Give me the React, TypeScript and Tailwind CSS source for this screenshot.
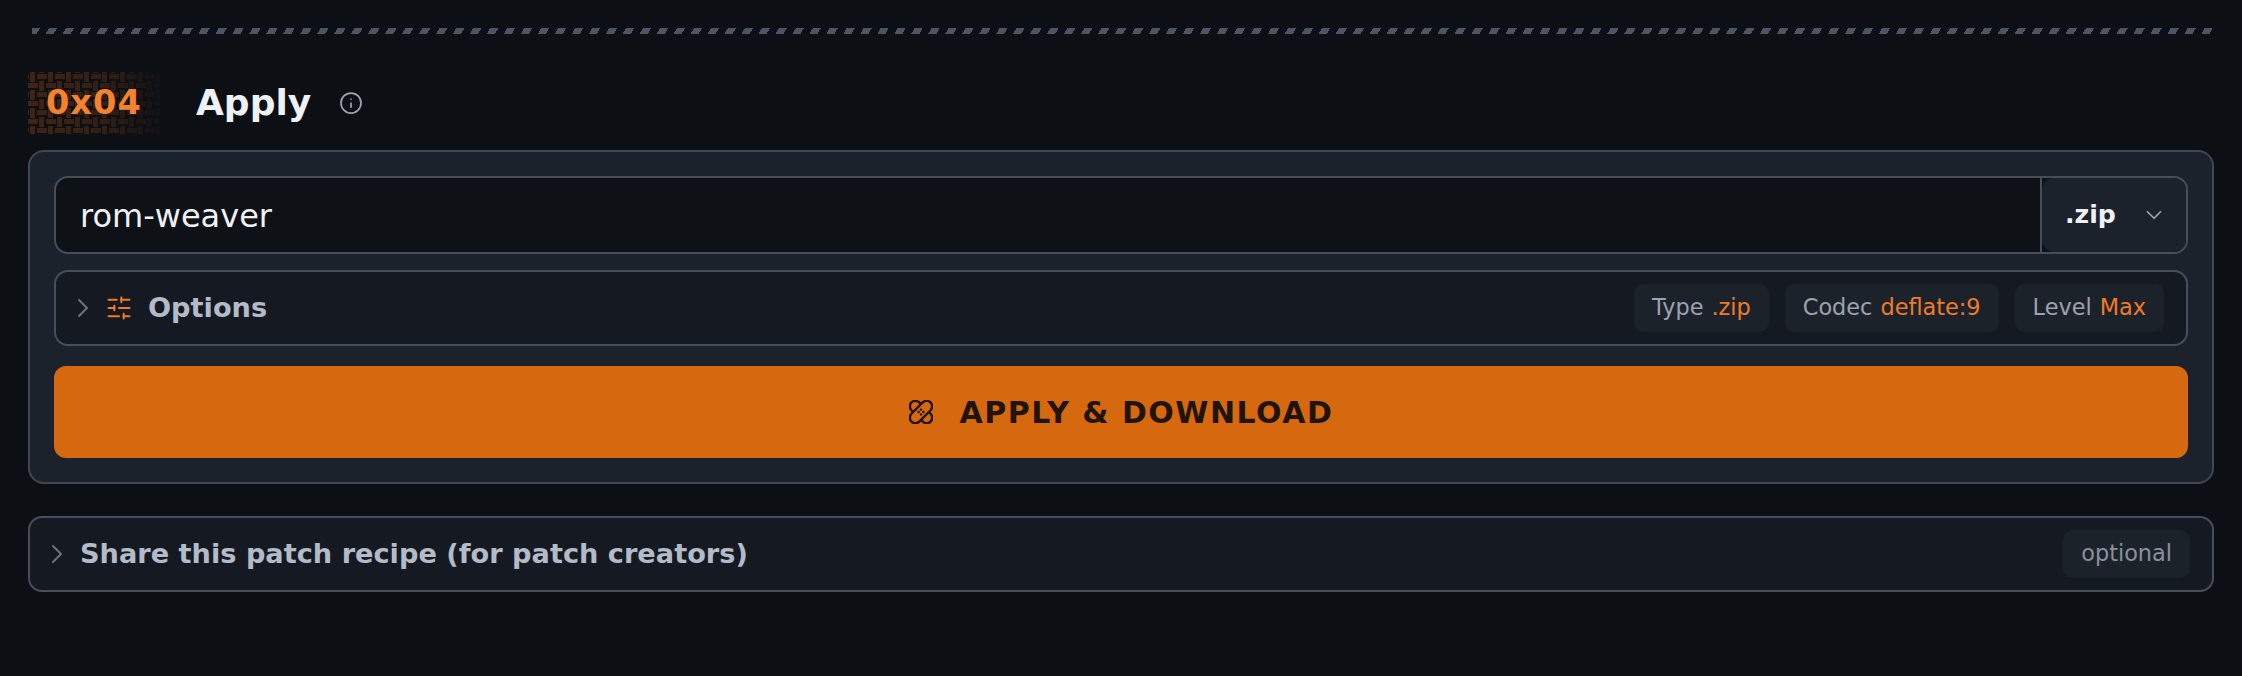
import { ChevronDown, ChevronRight, Info, SlidersHorizontal } from "lucide-react";

const font = "font-['DejaVu_Sans',sans-serif]";

const WeaveBadge = () => (
  <svg className="absolute left-0 top-0" width="142" height="62" viewBox="0 0 142 62">
    <defs>
      <pattern id="weave" width="18" height="18" patternUnits="userSpaceOnUse">
        <rect x="9" y="2" width="9" height="5" fill="#f97316" />
        <rect x="0" y="2" width="1" height="5" fill="#f97316" />
        <rect x="2" y="0" width="5" height="10" fill="#f97316" />
        <rect x="0" y="11" width="10" height="5" fill="#f97316" />
        <rect x="11" y="9" width="5" height="9" fill="#f97316" />
        <rect x="11" y="0" width="5" height="1" fill="#f97316" />
      </pattern>
      <linearGradient id="weaveFade" x1="0" x2="1" y1="0" y2="0">
        <stop offset="0" stopColor="#fff" stopOpacity="0.22" />
        <stop offset="0.55" stopColor="#fff" stopOpacity="0.16" />
        <stop offset="1" stopColor="#fff" stopOpacity="0" />
      </linearGradient>
      <mask id="weaveMask">
        <rect width="142" height="62" fill="url(#weaveFade)" />
      </mask>
    </defs>
    <rect width="142" height="62" rx="4" fill="url(#weave)" mask="url(#weaveMask)" />
  </svg>
);

const CrossedBandages = () => (
  <svg width="24" height="24" viewBox="0 0 24 24" fill="none" stroke="currentColor" strokeWidth="2.4">
    <rect x="-1.5" y="6.5" width="27" height="11" rx="5.5" transform="rotate(45 12 12)" />
    <rect x="-1.5" y="6.5" width="27" height="11" rx="5.5" transform="rotate(-45 12 12)" fill="#d6680f" />
    <g fill="currentColor" stroke="none">
      <circle cx="12" cy="9.6" r="1.2" />
      <circle cx="9.6" cy="12" r="1.2" />
      <circle cx="14.4" cy="12" r="1.2" />
      <circle cx="12" cy="14.4" r="1.2" />
    </g>
  </svg>
);

const Chip = ({ label, value }: { label: string; value: string }) => (
  <span className="flex h-[48px] items-center gap-[8px] rounded-[10px] bg-[#1c222a] px-[18px] text-[22.4px] text-[#9ca3af]">
    {label}
    <span className="text-[#f07a26]">{value}</span>
  </span>
);

export default function App() {
  return (
    <div className={`${font} min-h-[676px] bg-[#0c0f14] px-[28px] pt-[28px]`}>
      <div className="ml-[4px] h-[6px] bg-[repeating-linear-gradient(120deg,#4b5563_0,#4b5563_7px,transparent_7px,transparent_14.7px)]" />

      <div className="mt-[38px] flex h-[62px] items-center">
        <div className="relative flex h-[62px] w-[142px] items-center">
          <WeaveBadge />
          <span className="relative pl-[18px] text-[33.6px] font-bold tracking-[1px] text-[#f5822c]">0x04</span>
        </div>
        <h2 className="ml-[26px] text-[36px] font-bold text-[#eef1f6]">Apply</h2>
        <Info className="ml-[28px] h-[24px] w-[24px] text-[#9ca3af]" strokeWidth={1.75} />
      </div>

      <div className="mt-[16px] flex flex-col rounded-[16px] border-2 border-[#3f4755] bg-[#1b222b] px-[24px] pb-[24px] pt-[24px]">
        <div className="flex h-[78px] overflow-hidden rounded-[14px] border-2 border-[#464e5c] bg-[#0e1116]">
          <div className="flex flex-1 items-center border-r-2 border-[#464e5c] pl-[24px] pt-[1px] text-[32px] text-[#eef1f6]">rom-weaver</div>
          <div className="flex w-[144px] items-center gap-[25px] rounded-[12px] bg-[#1b222b] pl-[23px] text-[25.2px] font-bold text-[#eef1f6]">
            .zip
            <ChevronDown className="h-[26px] w-[26px] text-[#9ca3af]" strokeWidth={1.6} />
          </div>
        </div>

        <div className="mt-[16px] flex h-[76px] items-center rounded-[14px] border-2 border-[#464e5c] bg-[#151a22] pl-[11px] pr-[22px]">
          <ChevronRight className="h-[32px] w-[32px] text-[#6b7280]" strokeWidth={1.5} />
          <SlidersHorizontal className="ml-[6px] h-[28px] w-[28px] text-[#f07a26]" strokeWidth={1.75} />
          <span className="ml-[15px] text-[27.2px] font-bold text-[#b4bbc8]">Options</span>
          <div className="ml-auto flex gap-[16px]">
            <Chip label="Type" value=".zip" />
            <Chip label="Codec" value="deflate:9" />
            <Chip label="Level" value="Max" />
          </div>
        </div>

        <button className="mt-[20px] flex h-[92px] items-center justify-center gap-[27px] rounded-[12px] bg-[#d6680f] text-[30px] font-bold tracking-[0.05em] text-[#1f1405]">
          <CrossedBandages />
          APPLY &amp; DOWNLOAD
        </button>
      </div>

      <div className="mt-[32px] flex h-[76px] items-center rounded-[14px] border-2 border-[#464e5c] bg-[#151a22] pl-[11px] pr-[22px]">
        <ChevronRight className="h-[32px] w-[32px] text-[#6b7280]" strokeWidth={1.5} />
        <span className="ml-[7px] text-[27.2px] font-bold text-[#b4bbc8]">Share this patch recipe (for patch creators)</span>
        <span className="ml-auto flex h-[48px] items-center rounded-[10px] bg-[#1c222a] px-[18px] text-[22.4px] text-[#8a919d]">optional</span>
      </div>
    </div>
  );
}
